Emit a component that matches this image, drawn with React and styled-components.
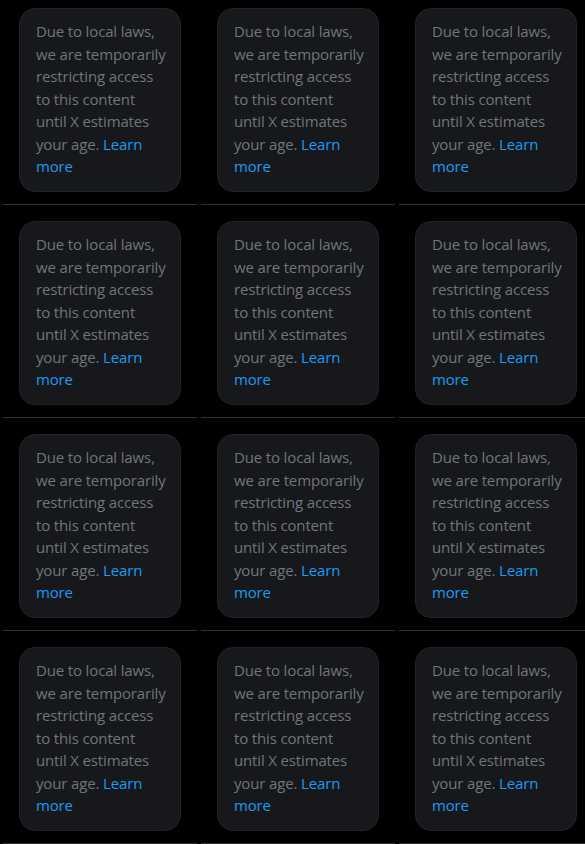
import React from "react";
import styled, { createGlobalStyle } from "styled-components";

const GlobalStyle = createGlobalStyle`
    html, body {
        margin: 0;
        padding: 0;
        background: #000;
        overflow: hidden;
    }
    body {
        font-family: "Open Sans", "Liberation Sans", sans-serif;
    }
`;

const App = () => {
    const cells = Array.from({ length: 12 });
    return (
        <>
            <GlobalStyle />
            <Grid>
                {cells.map((_, i) => (
                    <Cell key={i}>
                        <Notice>
                            Due to local laws, we are temporarily restricting access to this
                            content until X estimates your age. <Link href="#">Learn more</Link>
                        </Notice>
                    </Cell>
                ))}
            </Grid>
        </>
    );
};

export default App;

const Grid = styled.div`
    display: grid;
    grid-template-columns: repeat(3, 194px);
    column-gap: 4px;
    padding-left: 3px;
    margin-top: -8px;
    width: 600px;
`;

const Cell = styled.div`
    padding: 16px 0 12.5px;
    border-bottom: 1px solid #2f3336;
    display: flex;
    justify-content: center;
`;

const Notice = styled.div`
    box-sizing: border-box;
    width: 162px;
    padding: 11px 12px 13px 16px;
    background: #16181c;
    border: 1px solid #202327;
    border-radius: 16px;
    color: #71767b;
    font-size: 15px;
    line-height: 22.5px;
    letter-spacing: -0.15px;
`;

const Link = styled.a`
    color: #1d9bf0;
    text-decoration: none;
`;
